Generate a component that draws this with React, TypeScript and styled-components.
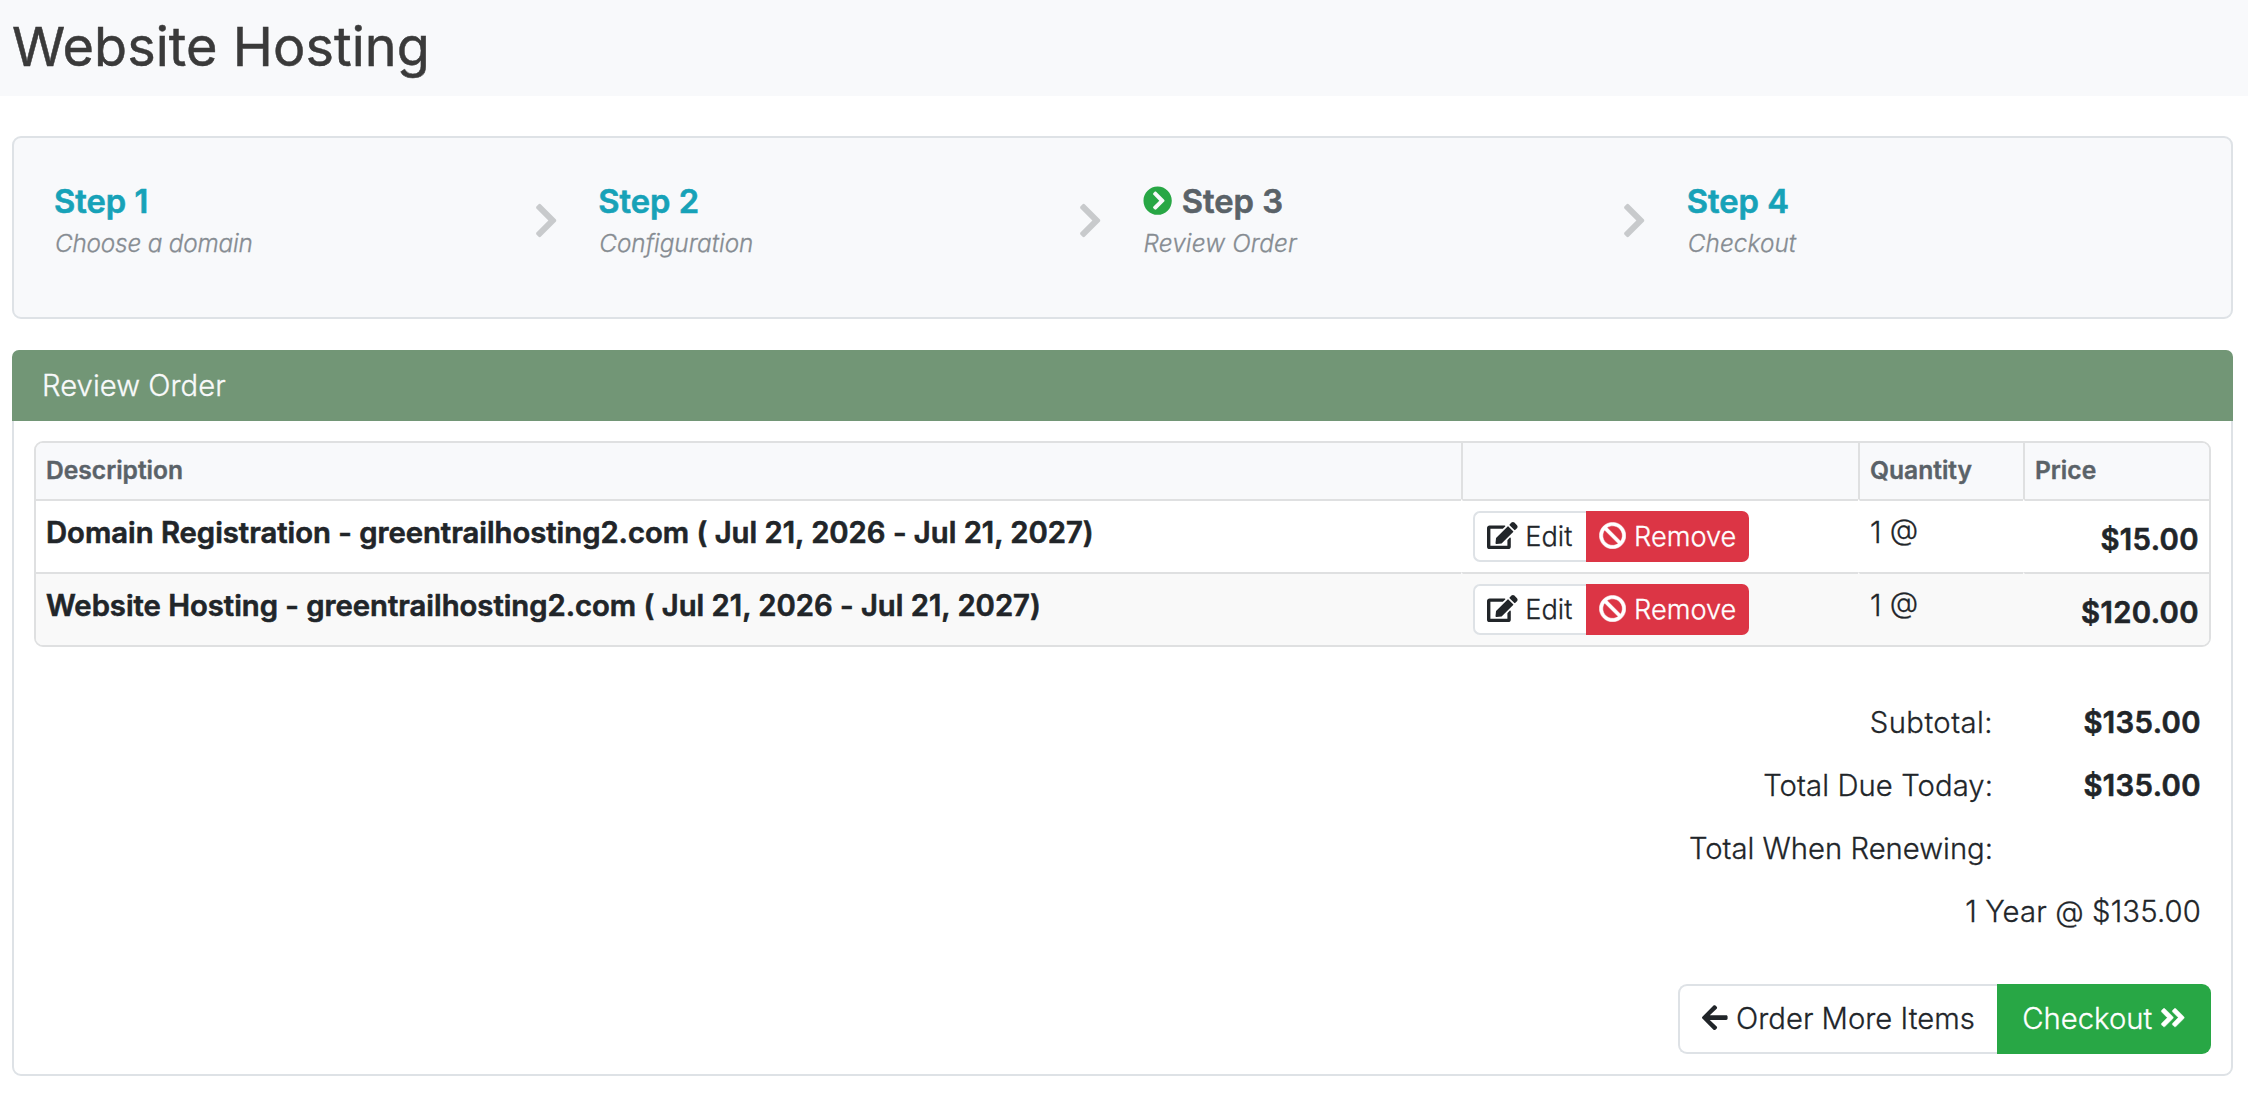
import React from "react";
import styled, { createGlobalStyle } from "styled-components";
import {
  FaAngleDoubleRight,
  FaArrowLeft,
  FaBan,
  FaChevronCircleRight,
  FaChevronRight,
  FaEdit,
} from "react-icons/fa";

const GlobalStyle = createGlobalStyle`
  * { box-sizing: border-box; }
  body {
    margin: 0;
    background: #fff;
    color: #212529;
    font-family: Inter, "Liberation Sans", sans-serif;
    font-size: 29.25px;
    font-weight: 300;
    line-height: 44px;
    -webkit-text-stroke: 0.3px;
  }
`;

const PageHeader = styled.header`
  height: 96px;
  padding: 14px 12px 0;
  background: #f8f9fb;
`;

const PageTitle = styled.h1`
  margin: 0;
  color: #3a3a3a;
  font-size: 54px;
  font-weight: 400;
  letter-spacing: 0.05px;
  line-height: 65px;
  -webkit-text-stroke: 0.5px;
`;

const Main = styled.main`
  display: flex;
  flex-direction: column;
  gap: 31px;
  padding: 40px 15px 42px 12px;
`;

const Steps = styled.ol`
  display: flex;
  height: 183px;
  margin: 0;
  padding: 43px 20px 0;
  border: 2px solid #dee2e6;
  border-radius: 9px;
  background: #f8f9fb;
  list-style: none;
`;

const Step = styled.li`
  display: flex;
  flex: 1 1 0;
  justify-content: space-between;
  padding: 0 20px 0 20px;
`;

const StepTitle = styled.div<{ $active?: boolean }>`
  display: flex;
  align-items: center;
  gap: 10px;
  color: ${(p) => (p.$active ? "#5a6268" : "#17a2b8")};
  font-size: 32.7px;
  font-weight: 600;
  line-height: 40px;
  -webkit-text-stroke: 0.6px;

  svg {
    width: 29.25px;
    height: 29.25px;
    color: #28a745;
  }
`;

const StepNote = styled.div<{ $tracking?: number }>`
  margin: 4px 0 0 1px;
  color: #868c92;
  font-size: 24.3px;
  font-style: italic;
  letter-spacing: ${(p) => p.$tracking ?? 0}px;
  line-height: 36px;
`;

const StepArrow = styled(FaChevronRight)`
  width: 24.4px;
  height: 39px;
  margin-top: 20px;
  color: #c8cacc;
`;

const Card = styled.section`
  height: 726px;
  border: 2px solid #dee2e6;
  border-radius: 9px;
`;

const CardHeader = styled.h2`
  height: 71px;
  margin: -2px -2px 0;
  padding: 14px 30px 0;
  border-radius: 7px 7px 0 0;
  background: #729676;
  color: #f8f9fa;
  font-size: 29.25px;
  font-weight: 300;
  letter-spacing: 0.03px;
  line-height: 44px;
`;

const CardBody = styled.div`
  padding: 20px 20px 0;
`;

const TableFrame = styled.div`
  overflow: hidden;
  border: 2px solid #dfe0e1;
  border-radius: 9px;
`;

const Table = styled.table`
  width: 100%;
  border-collapse: separate;
  border-spacing: 0;
  table-layout: fixed;
`;

const Col = styled.col<{ $width?: number }>`
  width: ${(p) => (p.$width ? `${p.$width}px` : "auto")};
`;

const HeadCell = styled.th`
  height: 56px;
  padding: 0 10px 1px;
  border-left: 2px solid #dfe0e1;
  background: #f8f9fb;
  color: #5a6268;
  font-size: 24.6px;
  font-weight: 600;
  line-height: 37px;
  text-align: left;
  -webkit-text-stroke: 0.4px;

  &:first-child { border-left: 0; }
`;

const Row = styled.tr`
  height: 73px;

  &:nth-child(even) { background: #f9f9f9; }
`;

const Cell = styled.td`
  padding: 10px 10px 0;
  border-top: 2px solid #dfe0e1;
  border-left: 2px solid transparent;
  vertical-align: top;

  &:first-child { border-left: 0; }
`;

const DescriptionCell = styled(Cell)`
  font-weight: 600;
  letter-spacing: -0.015px;
  -webkit-text-stroke: 0.6px;
`;

const PriceCell = styled(Cell)`
  padding-top: 17px;
  font-weight: 600;
  letter-spacing: 0.4px;
  text-align: right;
  -webkit-text-stroke: 0.6px;
`;

const ButtonGroup = styled.div`
  display: flex;
`;

const Button = styled.button<{ $tone: "light" | "danger" | "success"; $small?: boolean }>`
  height: ${(p) => (p.$small ? 51 : 70)}px;
  padding: ${(p) => (p.$small ? "0 13px 1px" : "0 25px")};
  border: 0 solid #dee2e6;
  background: ${(p) => ({ light: "#fff", danger: "#dc3545", success: "#28a745" })[p.$tone]};
  color: ${(p) => (p.$tone === "light" ? "#212529" : "#fff")};
  font-family: inherit;
  font-size: ${(p) => (p.$small ? 27.2 : 29.25)}px;
  font-weight: 300;
  line-height: ${(p) => (p.$small ? 41 : 44)}px;
  white-space: nowrap;

  &:first-child {
    padding-left: ${(p) => (p.$small ? 12 : 22.5)}px;
    padding-right: ${(p) => (p.$small ? 14 : 22.5)}px;
    border-width: 2px 0 2px 2px;
    border-radius: ${(p) => (p.$small ? 7 : 9)}px 0 0 ${(p) => (p.$small ? 7 : 9)}px;
  }

  &:last-child {
    border-radius: 0 ${(p) => (p.$small ? 7 : 9)}px ${(p) => (p.$small ? 7 : 9)}px 0;
  }

  svg {
    vertical-align: -0.125em;
  }
`;

const EditIcon = styled(FaEdit)`
  width: 1.125em;
`;

const RemoveIcon = styled(FaBan)`
  stroke: currentColor;
  stroke-width: 10px;
`;

const BackIcon = styled(FaArrowLeft)`
  width: 0.875em;
`;

const ForwardIcon = styled(FaAngleDoubleRight)`
  width: 0.875em;
  stroke: currentColor;
  stroke-width: 10px;
`;

const Totals = styled.dl`
  display: grid;
  grid-template-columns: 1fr 208px;
  grid-auto-rows: 63px;
  margin: 54px 10px 0 0;
  text-align: right;
`;

const TotalLabel = styled.dt<{ $tracking?: number }>`
  letter-spacing: ${(p) => p.$tracking ?? 0}px;
`;

const TotalValue = styled.dd`
  margin: 0;
  font-weight: 600;
  letter-spacing: 0.4px;
  -webkit-text-stroke: 0.6px;
`;

const RenewalTerm = styled.dd`
  grid-column: 1 / -1;
  margin: 0;
  letter-spacing: 0.14px;
`;

const CardActions = styled.footer`
  display: flex;
  justify-content: flex-end;
  margin-top: 31px;
`;

const steps = [
  { title: "Step 1", note: "Choose a domain", tracking: -0.18 },
  { title: "Step 2", note: "Configuration" },
  { title: "Step 3", note: "Review Order", active: true, tracking: 0.15 },
  { title: "Step 4", note: "Checkout", tracking: 0.1 },
];

const items = [
  { description: "Domain Registration - greentrailhosting2.com ( Jul 21, 2026 - Jul 21, 2027)", price: "$15.00" },
  { description: "Website Hosting - greentrailhosting2.com ( Jul 21, 2026 - Jul 21, 2027)", price: "$120.00" },
];

export default function App() {
  return (
    <>
      <GlobalStyle />
      <PageHeader>
        <PageTitle>Website Hosting</PageTitle>
      </PageHeader>
      <Main>
        <Steps>
          {steps.map((step, index) => (
            <Step key={step.title}>
              <div>
                <StepTitle $active={step.active}>
                  {step.active && <FaChevronCircleRight />}
                  {step.title}
                </StepTitle>
                <StepNote $tracking={step.tracking}>{step.note}</StepNote>
              </div>
              {index < steps.length - 1 && <StepArrow />}
            </Step>
          ))}
        </Steps>
        <Card>
          <CardHeader>Review Order</CardHeader>
          <CardBody>
            <TableFrame>
              <Table>
                <colgroup>
                  <Col />
                  <Col $width={397} />
                  <Col $width={165} />
                  <Col $width={186} />
                </colgroup>
                <thead>
                  <tr>
                    <HeadCell>Description</HeadCell>
                    <HeadCell />
                    <HeadCell>Quantity</HeadCell>
                    <HeadCell>Price</HeadCell>
                  </tr>
                </thead>
                <tbody>
                  {items.map((item) => (
                    <Row key={item.description}>
                      <DescriptionCell>{item.description}</DescriptionCell>
                      <Cell>
                        <ButtonGroup>
                          <Button $tone="light" $small>
                            <EditIcon /> Edit
                          </Button>
                          <Button $tone="danger" $small>
                            <RemoveIcon /> Remove
                          </Button>
                        </ButtonGroup>
                      </Cell>
                      <Cell>1 @</Cell>
                      <PriceCell>{item.price}</PriceCell>
                    </Row>
                  ))}
                </tbody>
              </Table>
            </TableFrame>
            <Totals>
              <TotalLabel $tracking={0.45}>Subtotal:</TotalLabel>
              <TotalValue>$135.00</TotalValue>
              <TotalLabel $tracking={0.08}>Total Due Today:</TotalLabel>
              <TotalValue>$135.00</TotalValue>
              <TotalLabel>Total When Renewing:</TotalLabel>
              <TotalValue />
              <RenewalTerm>1 Year @ $135.00</RenewalTerm>
            </Totals>
            <CardActions>
              <ButtonGroup>
                <Button $tone="light">
                  <BackIcon /> Order More Items
                </Button>
                <Button $tone="success">
                  Checkout <ForwardIcon />
                </Button>
              </ButtonGroup>
            </CardActions>
          </CardBody>
        </Card>
      </Main>
    </>
  );
}
